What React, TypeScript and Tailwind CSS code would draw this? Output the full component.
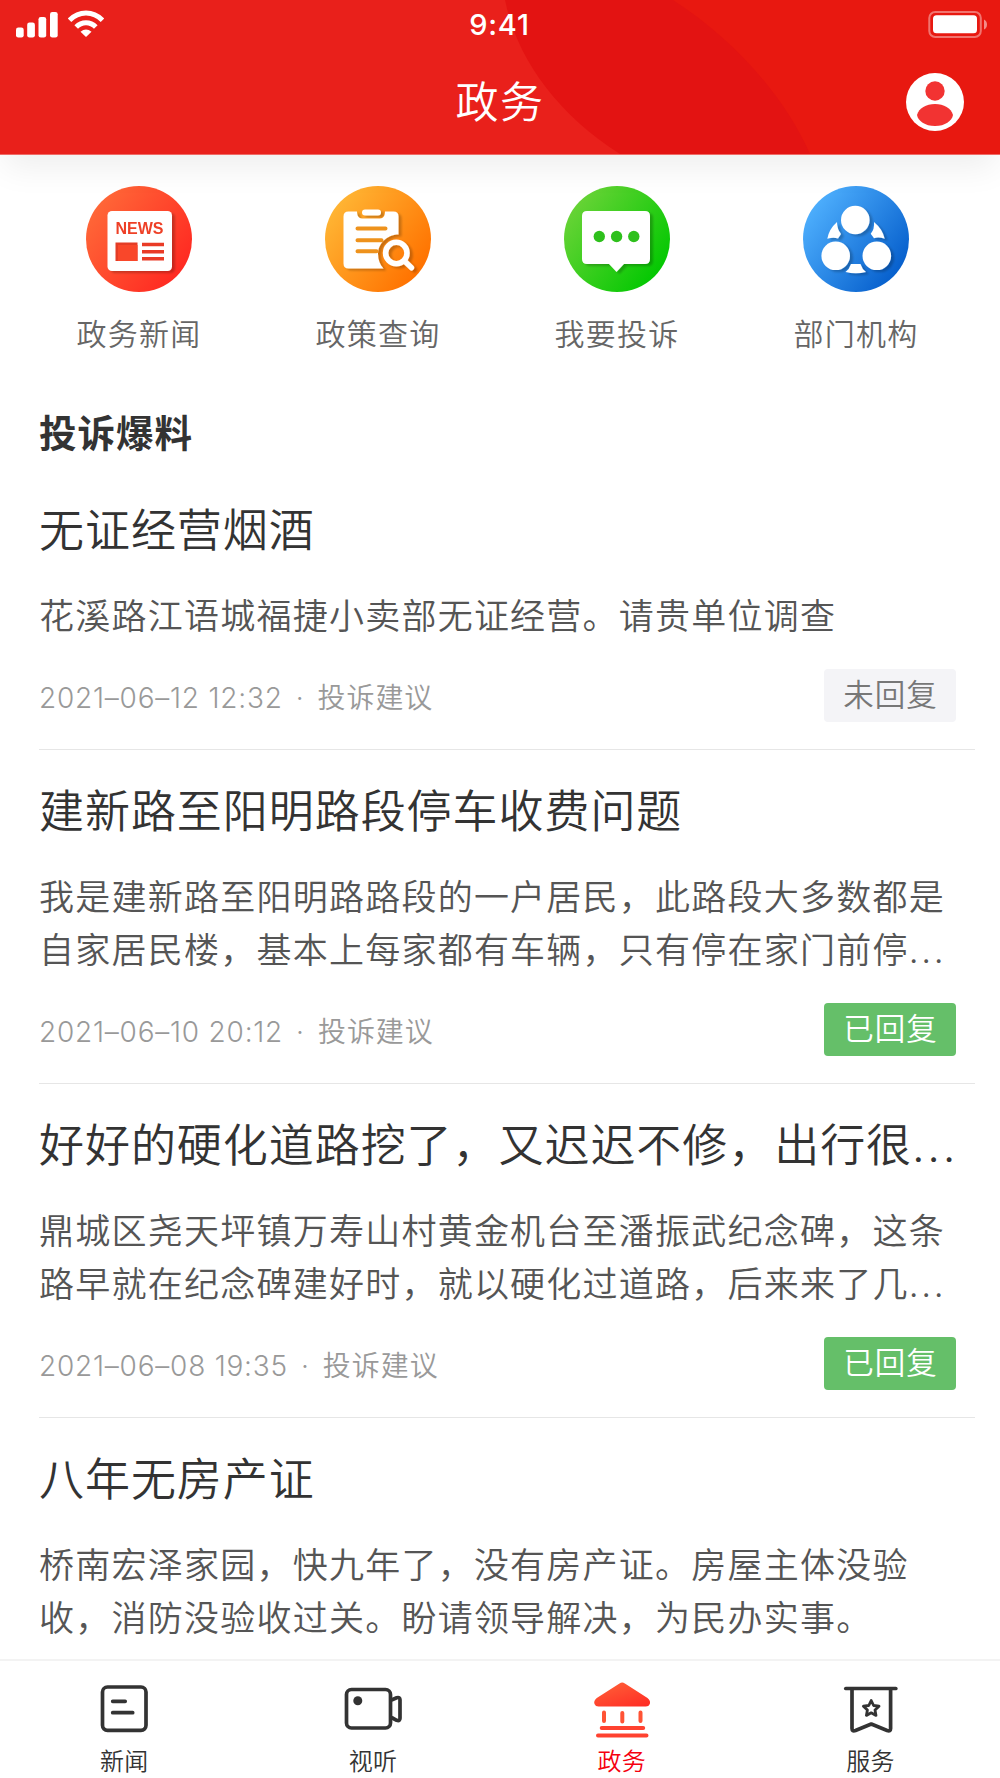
import type { ReactNode } from "react";
import clsx from "clsx";

const shortcuts = [
  { name: "政务新闻", icon: <NewsIcon /> },
  { name: "政策查询", icon: <PolicyIcon /> },
  { name: "我要投诉", icon: <ComplaintIcon /> },
  { name: "部门机构", icon: <DepartmentIcon /> },
];

const complaints = [
  {
    title: "无证经营烟酒",
    desc: "花溪路江语城福捷小卖部无证经营。请贵单位调查",
    time: "2021–06–12 12:32",
    replied: false,
  },
  {
    title: "建新路至阳明路段停车收费问题",
    desc: "我是建新路至阳明路路段的一户居民，此路段大多数都是自家居民楼，基本上每家都有车辆，只有停在家门前停...",
    time: "2021–06–10 20:12",
    replied: true,
  },
  {
    title: "好好的硬化道路挖了，又迟迟不修，出行很...",
    desc: "鼎城区尧天坪镇万寿山村黄金机台至潘振武纪念碑，这条路早就在纪念碑建好时，就以硬化过道路，后来来了几...",
    time: "2021–06–08 19:35",
    replied: true,
  },
  {
    title: "八年无房产证",
    desc: "桥南宏泽家园，快九年了，没有房产证。房屋主体没验收，消防没验收过关。盼请领导解决，为民办实事。",
  },
];

const tabs = [
  { name: "新闻", icon: <NewsTabIcon />, active: false },
  { name: "视听", icon: <VideoTabIcon />, active: false },
  { name: "政务", icon: <GovTabIcon />, active: true },
  { name: "服务", icon: <ServiceTabIcon />, active: false },
];

function Disc({ id, from, to, children }: { id: string; from: string; to: string; children: ReactNode }) {
  return (
    <svg viewBox="0 0 106 106" className="size-[106px]">
      <defs>
        <linearGradient id={id} x1="0.1" y1="0.2" x2="0.9" y2="0.8">
          <stop offset="0" stopColor={from} />
          <stop offset="1" stopColor={to} />
        </linearGradient>
        <filter id={`${id}-shadow`} x="-20%" y="-20%" width="140%" height="140%">
          <feDropShadow dx="3" dy="2" stdDeviation="1.3" floodColor="#000" floodOpacity="0.22" />
        </filter>
      </defs>
      <circle cx="53" cy="53" r="53" fill={`url(#${id})`} />
      <g filter={`url(#${id}-shadow)`}>{children}</g>
    </svg>
  );
}

function NewsIcon() {
  return (
    <Disc id="disc-news" from="#ff6637" to="#ff2a22">
      <rect x="21.5" y="25" width="64.5" height="60" rx="4.5" fill="#fff" />
      <text x="53.5" y="47.5" textAnchor="middle" fontSize="16" fontWeight="700" fill="#ee4128" fontFamily="Liberation Sans, sans-serif" textLength="48">
        NEWS
      </text>
      <rect x="29.5" y="56.5" width="22" height="18.5" fill="#e43d26" />
      <rect x="32" y="59" width="19.5" height="16" fill="#f9472b" />
      <path d="M56 58.5h22M56 65.7h22M56 72.8h22" stroke="#e93a26" strokeWidth="3.6" />
    </Disc>
  );
}

function PolicyIcon() {
  return (
    <Disc id="disc-policy" from="#ffb433" to="#ff7200">
      <path
        d="M23.5 25.5H32c0 4 1.500 7 5 7h18c3.500 0 5-3 5-7h8.500q5 0 5 5V48.500C64 48.500 53 56 53 68c0 6 2 10.500 5.500 14.500H23.500q-5 0-5-5v-47q0-5 5-5z"
        fill="#fff"
      />
      <rect x="37" y="23.500" width="19" height="6" rx="3" fill="#fff" />
      <path d="M32.500 42.500h28M32.500 54.300h24M32.500 65.300h19" stroke="#ee921b" strokeWidth="4" strokeLinecap="round" />
      <circle cx="71.300" cy="67" r="10.700" fill="none" stroke="#fff" strokeWidth="5.600" />
      <path d="M80 75.500l6.500 6.300" stroke="#fff" strokeWidth="5.400" strokeLinecap="round" />
    </Disc>
  );
}

function ComplaintIcon() {
  return (
    <Disc id="disc-complaint" from="#66d335" to="#04c802">
      <path
        d="M23 25h58q5 0 5 5v43q0 5-5 5H60l-7.500 8L45 78H23q-5 0-5-5V30q0-5 5-5z"
        fill="#fff"
      />
      <circle cx="35.300" cy="50.500" r="5.700" fill="#2fc01d" />
      <circle cx="52.600" cy="50.500" r="5.700" fill="#2fc01d" />
      <circle cx="69.800" cy="50.500" r="5.700" fill="#2fc01d" />
    </Disc>
  );
}

function DepartmentIcon() {
  return (
    <Disc id="disc-department" from="#4cadfc" to="#0760cd">
      <circle cx="52.300" cy="34" r="14.300" fill="#fff" />
      <circle cx="32.700" cy="69.800" r="14.300" fill="#fff" />
      <circle cx="73.800" cy="69.800" r="14.300" fill="#fff" />
      <path d="M34 36q-8 7-9.700 16.800q6-1.800 10.700-.3l3-4.500q-4-5-4-12z" fill="#fff" />
      <path d="M71 36q8.500 7 10.700 16.800q-6-2-10.700-.6l-3.300-4.500q4-4.500 3.300-11.700z" fill="#fff" />
      <path d="M48 78h9.500q1.500 5 5.500 8q-10 2.500-20.500 0q4-3 5.500-8z" fill="#fff" />
    </Disc>
  );
}

function NewsTabIcon() {
  return (
    <svg viewBox="0 0 60 60" className="size-[60px]" fill="none" stroke="#333" strokeWidth="3.7" strokeLinecap="round">
      <rect x="8.500" y="8" width="43.500" height="43.300" rx="5" />
      <path d="M18.700 22.300h12.500M18.700 33.700h20" />
    </svg>
  );
}

function VideoTabIcon() {
  return (
    <svg viewBox="0 0 60 60" className="size-[60px]" fill="none" stroke="#333" strokeWidth="3.7" strokeLinejoin="round">
      <rect x="3.500" y="10.500" width="44" height="38.500" rx="5" />
      <path d="M48.500 21l5.200-2.200q3.300-1 3.300 2v18.500q0 3.200-3.300 2L48.500 38.500" />
      <circle cx="14.800" cy="21.700" r="4.500" fill="#333" stroke="none" />
    </svg>
  );
}

function GovTabIcon() {
  return (
    <svg viewBox="0 0 60 60" className="size-[60px]" fill="none" strokeLinecap="round">
      <defs>
        <linearGradient id="gov-roof" x1="0.2" y1="0" x2="0.9" y2="1">
          <stop offset="0" stopColor="#ff5f37" />
          <stop offset="1" stopColor="#ff2d25" />
        </linearGradient>
      </defs>
      <path d="M27.500 4.500q2.700-1.800 5.400 0L55.500 19q3.500 3 2.300 6-1 2.500-4 2.500H6.500q-3 0-4-2.500-1.200-3 2.300-6z" fill="url(#gov-roof)" />
      <path d="M12 33.500v8.500M30.300 34v8.500M48.500 33.500v8.500" stroke="#ff5335" strokeWidth="4" />
      <path d="M9.700 49h41.500M6 56.500h48.500" stroke="#ff4230" strokeWidth="4" />
    </svg>
  );
}

function ServiceTabIcon() {
  return (
    <svg viewBox="0 0 60 60" className="size-[60px]" fill="none" stroke="#333" strokeWidth="3.700" strokeLinecap="round" strokeLinejoin="round">
      <path d="M4.800 9.500h50" />
      <path d="M11 10v39.500q0 3.300 3.500 2l15.800-6.500 15.800 6.500q3.500 1.300 3.500-2V10" />
      <path
        d="M30.200 21.500l2.400 5 5.400.7-4 3.800 1 5.400-4.800-2.600-4.800 2.600 1-5.400-4-3.800 5.400-.7z"
        strokeWidth="2.800"
      />
    </svg>
  );
}

function StatusBar() {
  return (
    <div className="grid h-[50px] grid-cols-3 items-center pl-4 pr-3 text-white">
      <div className="flex items-center gap-2.5">
        <svg viewBox="0 0 42 27" className="h-[27px] w-[42px]" fill="currentColor">
          <rect x="0" y="15.500" width="7.700" height="10" rx="2.300" />
          <rect x="11.200" y="10.500" width="7.700" height="15" rx="2.300" />
          <rect x="22.500" y="5" width="7.700" height="20.500" rx="2.300" />
          <rect x="34" y="0" width="7.700" height="25.500" rx="2.300" />
        </svg>
        <svg viewBox="0 0 36 27" className="h-[27px] w-9 -translate-y-0.5" fill="none" stroke="currentColor" strokeWidth="5">
          <path d="M1.500 10.300Q8.500 3 18 3t16.500 7.300" />
          <path d="M8.200 17Q12.300 12.700 18 12.700t9.800 4.300" />
          <path d="M18 27l-5.500-5.300Q18 17.500 23.500 21.700z" fill="currentColor" stroke="none" />
        </svg>
      </div>
      <span className="pr-[5px] text-center text-[29px] font-medium tracking-[0.8px]">9:41</span>
      <svg viewBox="0 0 60 28" className="h-7 w-[60px] justify-self-end" fill="none">
        <rect x="1.300" y="1" width="51.500" height="25" rx="6" stroke="#fff" strokeOpacity="0.4" strokeWidth="2" />
        <rect x="5" y="4.300" width="44" height="18" rx="3.500" fill="#fff" />
        <path d="M56 8.500q3 1.500 3 5t-3 5z" fill="#fff" fillOpacity="0.5" />
      </svg>
    </div>
  );
}

function Header() {
  return (
    <header className="relative z-10 h-[155px] shrink-0 border-b border-[#ef6a66] bg-[#e9201b] shadow-[0_16px_32px_-4px_rgba(0,0,0,0.07)]">
      {/* Background arcs */}
      <svg viewBox="0 0 1000 154" className="absolute inset-0 h-[154px] w-full">
        <path d="M505 0C516 55 553 111 620 154H1000V0z" fill="#e31312" />
        <path d="M673 0C735 40 785 97 810 154H1000V0z" fill="#e81810" />
      </svg>
      <div className="relative">
        <StatusBar />
        <div className="flex h-[103px] items-center justify-between px-9">
          <span className="w-[58px]" />
          <h1 className="pt-0.5 text-[43px] font-[350] tracking-[1.500px] text-white">政务</h1>
          <svg viewBox="0 0 58 58" className="size-[58px]">
            <circle cx="29" cy="29" r="29" fill="#fff" />
            <circle cx="29" cy="18" r="9.700" fill="#f23332" />
            <path d="M11 42C13 35 20 31 29 31s16 4 18 11c-1 6-8 11-18 11s-17-5-18-11z" fill="#f23332" />
          </svg>
        </div>
      </div>
    </header>
  );
}

// Spreads the trailing dots so they fill about one full-width character
function Ellipsized({ text }: { text: string }) {
  if (!text.endsWith("...")) return <>{text}</>;
  return (
    <>
      {text.slice(0, -3)}
      <span className="tracking-[2.600px]">...</span>
    </>
  );
}

export default function App() {
  return (
    <div
      lang="zh-CN"
      className="flex h-[1778px] w-[1000px] flex-col overflow-hidden bg-white font-['Inter','Noto_Sans_CJK_SC',sans-serif] font-[350]"
    >
      <Header />

      <main className="min-h-0 flex-1 overflow-hidden">
        {/* Shortcuts */}
        <div className="ml-[19.500px] mt-[31px] grid w-[956px] grid-cols-4">
          {shortcuts.map((item) => (
            <div key={item.name} className="flex flex-col items-center">
              {item.icon}
              <span className="mt-5 text-[30px] leading-[44px] tracking-[1.300px] text-[#666]">{item.name}</span>
            </div>
          ))}
        </div>

        <h2 className="ml-[39px] mt-[50px] text-[37.500px] font-bold leading-[56px] tracking-[1px] text-[#333]">投诉爆料</h2>

        {/* Complaint list */}
        <ul className="ml-[39px] mt-[7px] w-[936px]">
          {complaints.map((item) => (
            <li key={item.title} className="border-b border-[#e6e6e6] pb-[27px] pr-[19px] pt-8 last:border-b-0">
              <h3 className="whitespace-nowrap text-[45px] leading-[60px] tracking-[0.950px] text-[#333]">
                <Ellipsized text={item.title} />
              </h3>
              <p className="mt-[29px] text-[35px] leading-[53px] tracking-[1.240px] text-[#555]">
                <Ellipsized text={item.desc} />
              </p>
              {item.time && (
                <div className="mt-[26px] flex h-[53px] items-center justify-between">
                  <div className="flex items-center pt-1 text-[28px] tracking-[0.950px] text-[#999]">
                    <span className="tracking-[0.780px]">{item.time}</span>
                    <span className="mx-[13px]">·</span>
                    <span>投诉建议</span>
                  </div>
                  <span
                    className={clsx(
                      "flex h-[53px] w-[132px] items-center justify-center rounded pb-0.5 pl-px text-[30.500px] tracking-[1px]",
                      item.replied ? "bg-[#65bf69] text-white" : "bg-[#f4f4f7] text-[#777]"
                    )}
                  >
                    {item.replied ? "已回复" : "未回复"}
                  </span>
                </div>
              )}
            </li>
          ))}
        </ul>
      </main>

      {/* Bottom tab bar */}
      <nav className="h-[119px] shrink-0 border-t-2 border-[#f3f3f3] bg-white">
        <div className="grid w-[995px] grid-cols-4 pt-[18px]">
          {tabs.map((tab) => (
            <a key={tab.name} href="#" className="flex flex-col items-center">
              {tab.icon}
              <span
                className={clsx(
                  "mt-[7px] text-2xl tracking-[0.500px]",
                  tab.active ? "text-[#f5000f]" : "text-[#333]"
                )}
              >
                {tab.name}
              </span>
            </a>
          ))}
        </div>
      </nav>
    </div>
  );
}
